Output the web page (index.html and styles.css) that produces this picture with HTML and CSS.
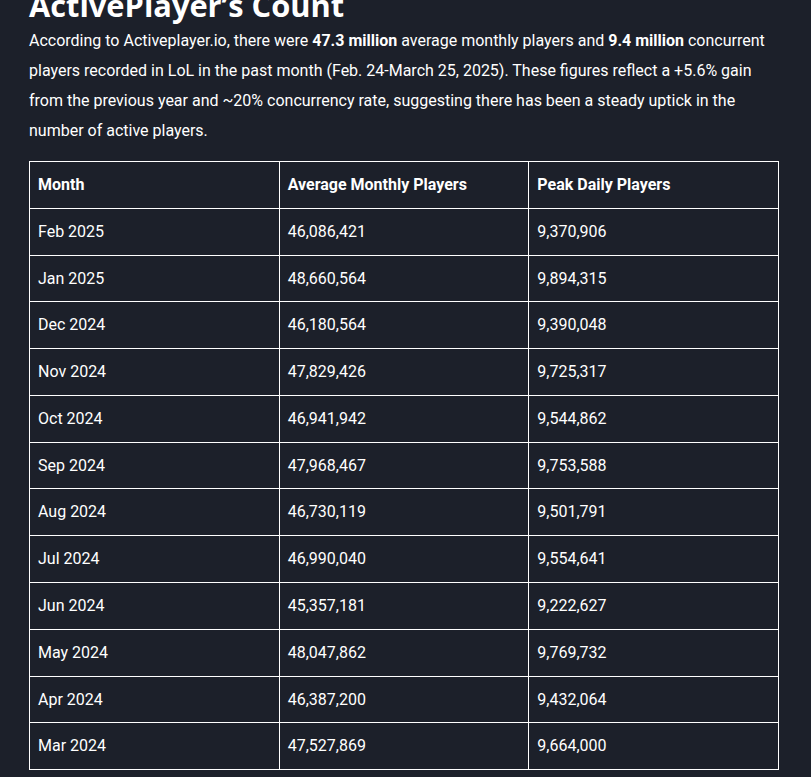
FILE: index.html
```html
<!DOCTYPE html>
<html>
<head>
<meta charset="utf-8">
<link rel="stylesheet" href="styles.css">
</head>
<body>
<div class="content">
<h2 class="title">ActivePlayer’s Count</h2>
<p class="intro">According to Activeplayer.io, there were <strong>47.3 million</strong> average monthly players and <strong>9.4 million</strong> concurrent players recorded in LoL in the past month (Feb. 24-March 25, 2025). These figures reflect a +5.6% gain from the previous year and ~20% concurrency rate, suggesting there has been a steady uptick in the number of active players.</p>
<table class="stats">
<thead>
<tr><th>Month</th><th>Average Monthly Players</th><th>Peak Daily Players</th></tr>
</thead>
<tbody>
<tr><td>Feb 2025</td><td>46,086,421</td><td>9,370,906</td></tr>
<tr><td>Jan 2025</td><td>48,660,564</td><td>9,894,315</td></tr>
<tr><td>Dec 2024</td><td>46,180,564</td><td>9,390,048</td></tr>
<tr><td>Nov 2024</td><td>47,829,426</td><td>9,725,317</td></tr>
<tr><td>Oct 2024</td><td>46,941,942</td><td>9,544,862</td></tr>
<tr><td>Sep 2024</td><td>47,968,467</td><td>9,753,588</td></tr>
<tr><td>Aug 2024</td><td>46,730,119</td><td>9,501,791</td></tr>
<tr><td>Jul 2024</td><td>46,990,040</td><td>9,554,641</td></tr>
<tr><td>Jun 2024</td><td>45,357,181</td><td>9,222,627</td></tr>
<tr><td>May 2024</td><td>48,047,862</td><td>9,769,732</td></tr>
<tr><td>Apr 2024</td><td>46,387,200</td><td>9,432,064</td></tr>
<tr><td>Mar 2024</td><td>47,527,869</td><td>9,664,000</td></tr>
</tbody>
</table>
</div>
</body>
</html>
```
FILE: styles.css
```css
html, body {
  margin: 0;
  padding: 0;
  background: #1c202a;
  overflow: hidden;
}
.content {
  padding: 0 32px 0 29px;
  color: #ffffff;
  font-family: Roboto, "Liberation Sans", sans-serif;
}
.title {
  margin: -16px 0 0 0;
  font-family: "Open Sans", sans-serif;
  font-weight: 700;
  font-size: 30.8px;
  line-height: 42px;
  letter-spacing: 0;
}
.intro {
  margin: 0 0 15px 0;
  font-size: 16px;
  line-height: 30px;
}
.intro strong {
  font-weight: 700;
}
.stats {
  width: 750px;
  border-collapse: collapse;
  table-layout: fixed;
  font-size: 16px;
}
.stats th, .stats td {
  border: 1px solid #ffffff;
  padding: 12px 8px;
  line-height: 21.7px;
  text-align: left;
  vertical-align: middle;
}
.stats td {
  line-height: 21.8px;
}
.stats th {
  font-weight: 700;
}
```
